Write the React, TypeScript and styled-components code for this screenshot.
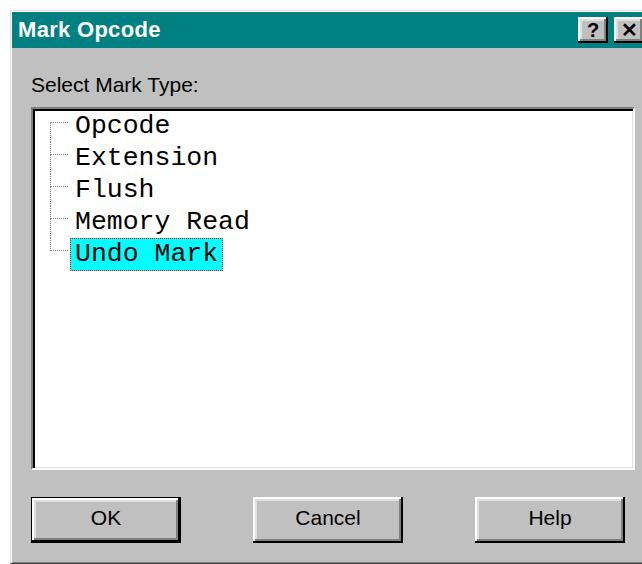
import styled, { createGlobalStyle, css } from "styled-components";

const GlobalStyle = createGlobalStyle`
  html, body {
    margin: 0;
    padding: 0;
    background: #ffffff;
    overflow: hidden;
  }
`;

const raised = css`
  box-shadow:
    inset -2px -2px #000000,
    inset 2px 2px #ffffff,
    inset -4px -4px #808080,
    inset 4px 4px #dfdfdf;
`;

const Window = styled.div`
  margin: 10px 0 0 10px;
  width: 640px;
  height: 554px;
  box-sizing: border-box;
  background: #c0c0c0;
  border: 1px solid;
  border-color: #dfdfdf #404040 #404040 #dfdfdf;
  padding: 1px;
  box-shadow: inset 1px 1px #ffffff, inset -1px -1px #808080;
  display: flex;
  flex-direction: column;
  font-family: "Liberation Sans", Arial, sans-serif;
`;

const TitleBar = styled.div`
  height: 36px;
  flex-shrink: 0;
  background: #008080;
  display: flex;
  align-items: center;
  padding: 0 4px 0 6px;
  gap: 6px;
`;

const Title = styled.span`
  flex: 1;
  color: #ffffff;
  font-weight: bold;
  font-size: 22px;
  letter-spacing: 0.3px;
`;

const CaptionButton = styled.button`
  width: 30px;
  height: 26px;
  padding: 0;
  border: none;
  background: #c0c0c0;
  ${raised};
  font-family: "Liberation Sans", Arial, sans-serif;
  font-weight: bold;
  font-size: 20px;
  line-height: 26px;
  color: #000000;
`;

const Body = styled.div`
  flex: 1;
  display: flex;
  flex-direction: column;
  padding: 25px 13px 0 19px;
`;

const Label = styled.div`
  font-size: 21px;
  line-height: 24px;
  color: #000000;
  margin-bottom: 10px;
`;

const ListBox = styled.ul`
  height: 363px;
  box-sizing: border-box;
  margin: 0;
  padding: 1px 0 0 17px;
  list-style: none;
  background: #ffffff;
  border: 2px solid;
  border-color: #808080 #ffffff #ffffff #808080;
  box-shadow: inset 2px 2px #000000, inset -1px -1px #dfdfdf;
  font-family: "Liberation Mono", "Courier New", monospace;
  font-size: 26.5px;
`;

const Row = styled.li`
  height: 32px;
  display: flex;
  align-items: stretch;
`;

const Connector = styled.div`
  width: 18px;
  display: flex;
  flex-direction: column;
`;

const dotted = "1px dotted #808080";

const Upper = styled.div<{ $first: boolean }>`
  height: 12px;
  border-bottom: ${dotted};
  border-left: ${(p) => (p.$first ? "1px solid transparent" : dotted)};
`;

const Lower = styled.div<{ $last: boolean }>`
  flex: 1;
  border-left: ${(p) => (p.$last ? "1px solid transparent" : dotted)};
`;

const ItemText = styled.span<{ $selected: boolean }>`
  margin-left: 2px;
  padding: 0 4px;
  height: 33px;
  box-sizing: border-box;
  line-height: 31px;
  white-space: pre;
  color: #000000;
  border: 1px ${(p) => (p.$selected ? "dotted #ff0000" : "solid transparent")};
  background: ${(p) => (p.$selected ? "#00ffff" : "transparent")};
`;

const ButtonRow = styled.div`
  display: flex;
  gap: 72px;
  margin-top: 27px;
`;

const PushButton = styled.button<{ $default?: boolean }>`
  width: 150px;
  height: 46px;
  padding: 0 0 4px;
  background: #c0c0c0;
  font-family: "Liberation Sans", Arial, sans-serif;
  font-size: 21px;
  color: #000000;
  border: ${(p) => (p.$default ? "1px solid #000000" : "none")};
  ${raised};
`;

const marks = ["Opcode", "Extension", "Flush", "Memory Read", "Undo Mark"];

export default function App() {
  const selected = "Undo Mark";

  return (
    <>
      <GlobalStyle />
      <Window>
        <TitleBar>
          <Title>Mark Opcode</Title>
          <CaptionButton>?</CaptionButton>
          <CaptionButton>✕</CaptionButton>
        </TitleBar>
        <Body>
          <Label>Select Mark Type:</Label>
          <ListBox>
            {marks.map((mark, i) => (
              <Row key={mark}>
                <Connector>
                  <Upper $first={i === 0} />
                  <Lower $last={i === marks.length - 1} />
                </Connector>
                <ItemText $selected={mark === selected}>{mark}</ItemText>
              </Row>
            ))}
          </ListBox>
          <ButtonRow>
            <PushButton $default>OK</PushButton>
            <PushButton>Cancel</PushButton>
            <PushButton>Help</PushButton>
          </ButtonRow>
        </Body>
      </Window>
    </>
  );
}
